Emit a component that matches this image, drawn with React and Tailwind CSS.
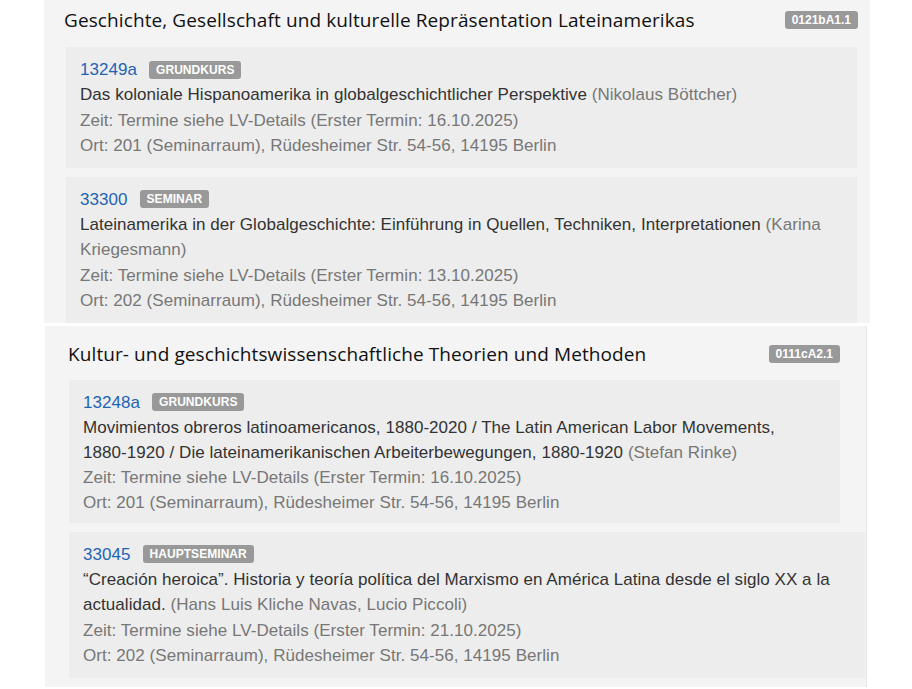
import React from "react";

const body = { fontFamily: '"Liberation Sans", Arial, sans-serif' };
const head = { fontFamily: '"Open Sans", "Noto Sans", sans-serif' };

function Label({ children, className = "" }) {
  return (
    <span
      className={
        "inline-block rounded-[3px] bg-[#999999] px-[7px] pt-[3px] pb-[2px] text-[12px] font-bold leading-[13px] text-white " +
        className
      }
      style={body}
    >
      {children}
    </span>
  );
}

function N({ children }) {
  return <span className="whitespace-nowrap">{children}</span>;
}

function Course({ id, type, title, persons, zeit, ort, className = "" }) {
  return (
    <div
      className={"bg-[#ededed] px-[14px] pt-[10px] text-[17px] tracking-[0.05px] " + className}
      style={body}
    >
      <div className="flex items-center gap-[12px]">
        <span className="text-[17px] text-[#1f64b3]">{id}</span>
        <Label>{type}</Label>
      </div>
      <div className="text-[#333333]">
        {title} <span className="text-[#777777]">{persons}</span>
      </div>
      <div className="text-[#777777]">Zeit: {zeit}</div>
      <div className="text-[#777777]">Ort: {ort}</div>
    </div>
  );
}

export default function App() {
  return (
    <div className="h-[689px] w-[912px] overflow-hidden bg-white">
      <section className="ml-[44px] w-[826px] bg-[#f4f4f4]">
        <div className="mb-[7px] flex items-center justify-between pl-[20px] pr-[12px] pt-[7px] pb-[7px]">
          <h2 className="text-[19px] leading-[26px] font-normal tracking-[0.1px] text-[#111111]" style={head}>
            Geschichte, Gesellschaft und kulturelle Repräsentation Lateinamerikas
          </h2>
          <Label>0121bA1.1</Label>
        </div>
        <div className="ml-[22px] mr-[13px] flex flex-col gap-[9px]">
          <Course
            className="pb-[9px] leading-[25.4px]"
            id="13249a"
            type="GRUNDKURS"
            title="Das koloniale Hispanoamerika in globalgeschichtlicher Perspektive"
            persons="(Nikolaus Böttcher)"
            zeit="Termine siehe LV-Details (Erster Termin: 16.10.2025)"
            ort="201 (Seminarraum), Rüdesheimer Str. 54-56, 14195 Berlin"
          />
          <Course
            className="pb-[9px] leading-[25.4px]"
            id="33300"
            type="SEMINAR"
            title="Lateinamerika in der Globalgeschichte: Einführung in Quellen, Techniken, Interpretationen"
            persons="(Karina Kriegesmann)"
            zeit="Termine siehe LV-Details (Erster Termin: 13.10.2025)"
            ort="202 (Seminarraum), Rüdesheimer Str. 54-56, 14195 Berlin"
          />
        </div>
      </section>

      <section className="mt-[3px] ml-[45px] w-[822px] border-r border-[#e6e6e6] bg-[#f4f4f4] pb-[9px]">
        <div className="flex items-center justify-between pl-[23px] pr-[26px] pt-[15px] pb-[13px]">
          <h2 className="text-[19px] leading-[26px] font-normal tracking-[0.1px] text-[#111111]" style={head}>
            Kultur- und geschichtswissenschaftliche Theorien und Methoden
          </h2>
          <Label>0111cA2.1</Label>
        </div>
        <div className="ml-[24px] flex flex-col gap-[9px]">
          <Course
            className="mr-[26px] pb-[8px] leading-[25px]"
            id="13248a"
            type="GRUNDKURS"
            title={
              <>
                Movimientos obreros latinoamericanos, <N>1880-2020</N> / The Latin American Labor Movements,{" "}
                <N>1880-1920</N> / Die lateinamerikanischen Arbeiterbewegungen, <N>1880-1920</N>
              </>
            }
            persons="(Stefan Rinke)"
            zeit="Termine siehe LV-Details (Erster Termin: 16.10.2025)"
            ort="201 (Seminarraum), Rüdesheimer Str. 54-56, 14195 Berlin"
          />
          <Course
            className="mr-[1px] pb-[9px] leading-[25.4px]"
            id="33045"
            type="HAUPTSEMINAR"
            title="“Creación heroica”. Historia y teoría política del Marxismo en América Latina desde el siglo XX a la actualidad."
            persons="(Hans Luis Kliche Navas, Lucio Piccoli)"
            zeit="Termine siehe LV-Details (Erster Termin: 21.10.2025)"
            ort="202 (Seminarraum), Rüdesheimer Str. 54-56, 14195 Berlin"
          />
        </div>
      </section>
    </div>
  );
}
